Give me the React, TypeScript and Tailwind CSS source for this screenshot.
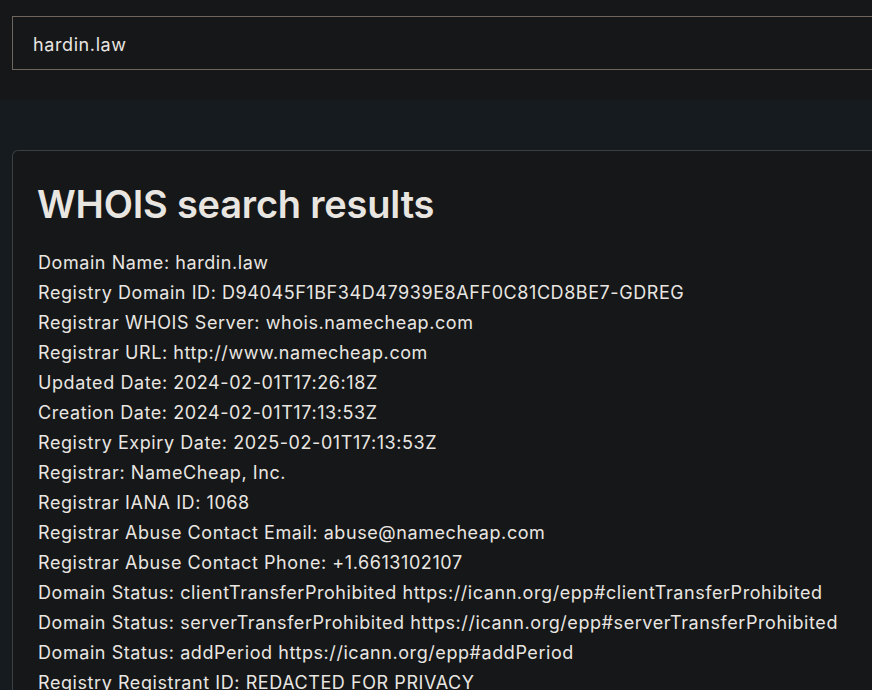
const rows = [
  "Domain Name: hardin.law",
  "Registry Domain ID: D94045F1BF34D47939E8AFF0C81CD8BE7-GDREG",
  "Registrar WHOIS Server: whois.namecheap.com",
  "Registrar URL: http://www.namecheap.com",
  "Updated Date: 2024-02-01T17:26:18Z",
  "Creation Date: 2024-02-01T17:13:53Z",
  "Registry Expiry Date: 2025-02-01T17:13:53Z",
  "Registrar: NameCheap, Inc.",
  "Registrar IANA ID: 1068",
  "Registrar Abuse Contact Email: abuse@namecheap.com",
  "Registrar Abuse Contact Phone: +1.6613102107",
  "Domain Status: clientTransferProhibited https://icann.org/epp#clientTransferProhibited",
  "Domain Status: serverTransferProhibited https://icann.org/epp#serverTransferProhibited",
  "Domain Status: addPeriod https://icann.org/epp#addPeriod",
  "Registry Registrant ID: REDACTED FOR PRIVACY",
];

export default function App() {
  return (
    <div className="w-[872px] h-[690px] overflow-hidden bg-[#151b1e] font-['Inter','Noto_Sans',sans-serif] text-[#e9e6e2]">
      {/* Search bar */}
      <div className="h-[100px] bg-[#161718] pt-4 pl-3">
        <div className="w-[1000px] h-[54px] border border-[#6e665c] flex items-center pl-5 pt-0.5 text-[18px] tracking-[0.6px]">
          hardin.law
        </div>
      </div>

      {/* Results */}
      <div className="pt-[50px] pl-3">
        <div className="w-[1000px] h-[600px] bg-[#161718] border-t border-l border-[#3b3f42] rounded-tl-md px-[24px] pt-[30px]">
          <h1 className="text-[38px] leading-[46px] font-semibold tracking-[-0.2px]">WHOIS search results</h1>
          <div className="mt-[21px] ml-px text-[18px] leading-[30px] tracking-[0.57px]">
            {rows.map((r, i) => (
              <div key={i} className="whitespace-nowrap">{r}</div>
            ))}
          </div>
        </div>
      </div>
    </div>
  );
}
